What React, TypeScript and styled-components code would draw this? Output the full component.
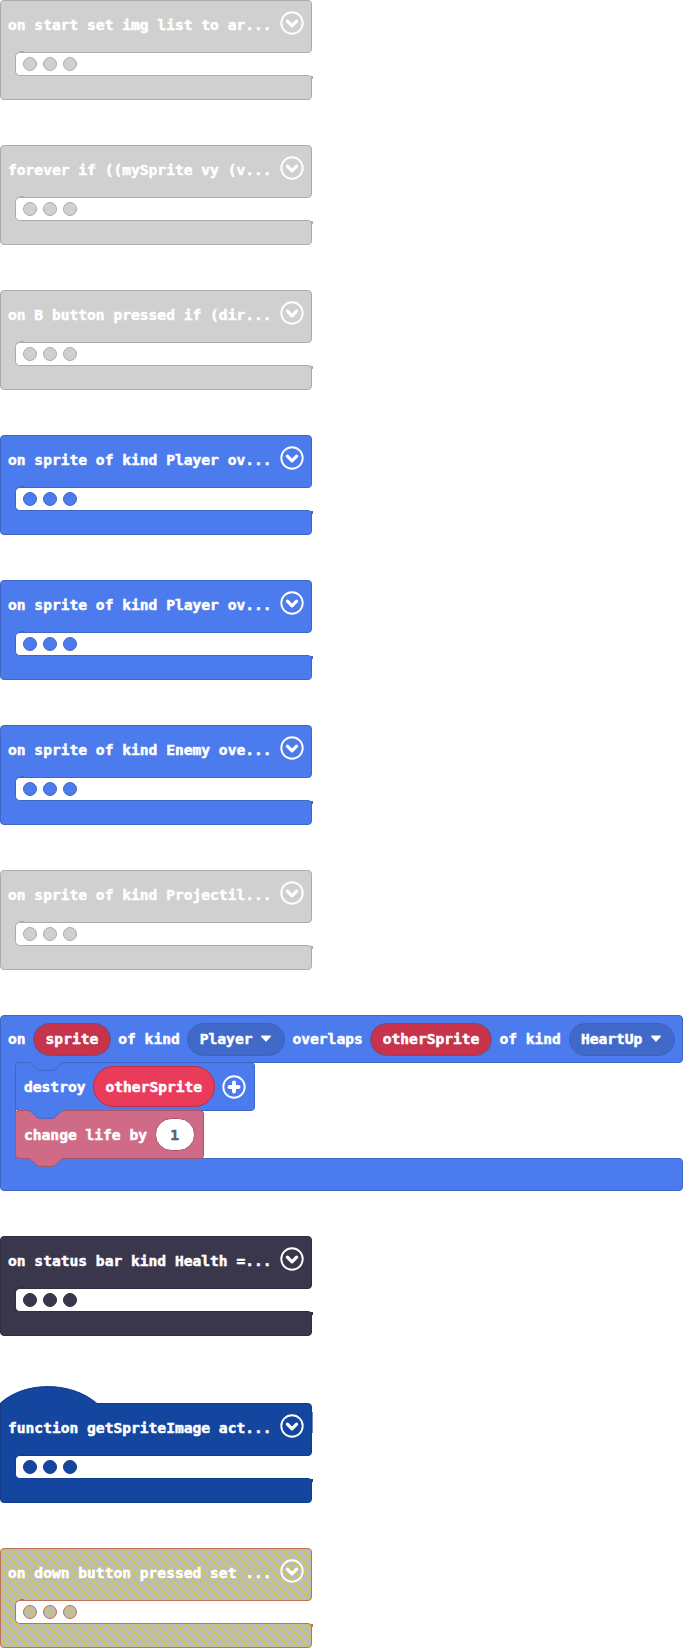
import React from "react";
import styled, { createGlobalStyle, css } from "styled-components";

const GlobalStyle = createGlobalStyle`
  body { margin: 0; background: #fff; }
  * { box-sizing: border-box; }
`;

interface Tone {
  fill: string;
  edge: string;
  hatch?: boolean;
}

const tones = {
  gray: { fill: "#d0d0d0", edge: "#acacac" },
  blue: { fill: "#4b7bec", edge: "#3f67c5" },
  navy: { fill: "#3a364c", edge: "#312d40" },
  royal: { fill: "#1446a0", edge: "#113b87" },
  disabled: { fill: "#bbbbbb", edge: "#bd7058", hatch: true },
  pink: { fill: "#cf6a87", edge: "#a6556c" },
} satisfies Record<string, Tone>;

const surface = css<{ $tone: Tone; $shift?: number }>`
  background-color: ${(p) => p.$tone.fill};
  ${(p) =>
    p.$tone.hatch &&
    css`
      background-image: linear-gradient(45deg, #d0cd3500 calc(50% - 0.8px), #d0cd35 50%, #d0cd3500 calc(50% + 0.8px)),
        linear-gradient(-45deg, #d0cd3500 calc(50% - 0.8px), #d0cd35 50%, #d0cd3500 calc(50% + 0.8px));
      background-size: 10px 10px;
      background-origin: border-box;
      background-position: 0 ${p.$shift ?? 0}px;
    `}
`;

const Workspace = styled.main`
  display: flex;
  flex-direction: column;
  align-items: flex-start;
  gap: 44px;
  width: 683px;
  height: 1648px;
  overflow: hidden;
  font: bold 14.6px/20px "DejaVu Sans Mono", monospace;
  -webkit-text-stroke: 0.5px;
  color: #fff;
  white-space: pre;
`;

const Block = styled.section<{ $hat?: boolean }>`
  position: relative;
  flex: none;
  width: 313px;
  height: 101px;
  margin-top: ${(p) => (p.$hat ? 22 : 0)}px;
`;

const WideBlock = styled(Block)`
  width: 683px;
  height: 177px;
`;

const Header = styled.header<{ $tone: Tone }>`
  ${surface}
  display: flex;
  justify-content: space-between;
  width: 312px;
  height: 53px;
  padding: 14px 7px 0 7px;
  border: 1px solid ${(p) => p.$tone.edge};
  border-radius: 4px 4px 4px 0;
`;

const WideHeader = styled(Header)`
  justify-content: flex-start;
  align-items: center;
  gap: 7.6px;
  width: 683px;
  height: 48px;
  padding: 0 7px;
`;

const Body = styled.div<{ $tone: Tone }>`
  ${surface}
  position: relative;
  z-index: 1;
  display: flex;
  width: 308px;
  height: 24px;
  margin-top: -1px;
  padding-left: 14px;
  border-left: 1px solid ${(p) => p.$tone.edge};
`;

const WideBody = styled(Body)`
  width: 679px;
  height: 97px;
`;

const Slot = styled.div<{ $tone: Tone }>`
  display: flex;
  flex: 1;
  gap: 6px;
  padding: 4px 0 0 7px;
  background: #fff;
  border: 1px solid ${(p) => p.$tone.edge};
  border-right: 0;
  border-radius: 5px 0 0 5px;
  &::before {
    content: "";
    position: absolute;
    left: 19px;
    top: -1px;
    width: 4px;
    height: 2px;
    background: ${(p) => p.$tone.edge};
  }
`;

const Stack = styled.div<{ $tone: Tone }>`
  display: flex;
  flex: 1;
  flex-direction: column;
  align-items: flex-start;
  background: #fff;
  border: 1px solid ${(p) => p.$tone.edge};
  border-right: 0;
  border-radius: 4px 0 0 4px;
`;

const Dot = styled.i<{ $tone: Tone }>`
  ${surface}
  width: 14px;
  height: 14px;
  border: 1px solid ${(p) => p.$tone.edge};
  border-radius: 50%;
`;

const Footer = styled.footer<{ $tone: Tone }>`
  ${surface}
  position: relative;
  width: 312px;
  height: 25px;
  margin-top: -1px;
  border: 1px solid ${(p) => p.$tone.edge};
  border-radius: 0 4px 4px 4px;
  &::after {
    content: "";
    position: absolute;
    right: -2px;
    top: 0;
    width: 2px;
    height: 3px;
    background: ${(p) => p.$tone.edge};
  }
`;

const WideFooter = styled(Footer)`
  width: 683px;
  height: 33px;
  &::after {
    display: none;
  }
`;

const Statement = styled.div<{ $tone: Tone }>`
  position: relative;
  display: flex;
  align-items: center;
  gap: 7.6px;
  flex: none;
  height: 49px;
  margin: -1px 0 0 -1px;
  padding: 0 8px;
  background: ${(p) => p.$tone.fill};
  border: 1px solid ${(p) => p.$tone.edge};
  border-radius: 4px;
`;

const Pill = styled.span<{ $fill: string; $edge: string; $tall?: boolean; $ink?: string }>`
  display: flex;
  align-items: center;
  justify-content: center;
  gap: 8px;
  min-width: 40px;
  height: ${(p) => (p.$tall ? 41 : 33)}px;
  padding: 0 11.4px;
  color: ${(p) => p.$ink ?? "#fff"};
  background: ${(p) => p.$fill};
  border: 1px solid ${(p) => p.$edge};
  border-radius: 21px;
`;

const Icon = styled.svg`
  flex: none;
  display: block;
`;

const HeaderIcon = styled(Icon)`
  margin-top: -4px;
`;

const NotchShape = styled.svg<{ $bottom?: boolean }>`
  position: absolute;
  left: 12px;
  ${(p) => (p.$bottom ? "bottom: -9px;" : "top: -1px;")}
  z-index: 1;
`;

const HatShape = styled.svg`
  position: absolute;
  left: 0;
  top: -17px;
`;

const SideShade = styled.i`
  position: absolute;
  left: 312px;
  top: 9px;
  width: 1px;
  height: 21px;
  background: #113b8799;
`;

const ExpandIcon = () => (
  <HeaderIcon width="24" height="24" viewBox="0 0 24 24" fill="none" stroke="#fff">
    <circle cx="12" cy="12" r="10.7" strokeWidth="1.9" />
    <path d="M7.4 10.2 12 14.8 16.6 10.2" strokeWidth="3.3" strokeLinecap="round" strokeLinejoin="round" />
  </HeaderIcon>
);

const PlusIcon = () => (
  <Icon width="24" height="24" viewBox="0 0 24 24" fill="none" stroke="#fff">
    <circle cx="12" cy="12" r="10.7" strokeWidth="1.9" />
    <path d="M12 7.5v9M7.5 12h9" strokeWidth="4" strokeLinecap="round" />
  </Icon>
);

const Caret = () => (
  <Icon width="12" height="8" viewBox="0 0 12 8" fill="#fff" stroke="#fff" strokeWidth="1.6" strokeLinejoin="round">
    <path d="M1.8 1.3h8.4L6 5.8z" />
  </Icon>
);

const Notch = ({ tone, bottom }: { tone: Tone; bottom?: boolean }) => (
  <NotchShape $bottom={bottom} width="36" height="9" viewBox="0 0 36 9">
    <path
      d="M0 0v.5c2 0 3 1 4 2l4 4c1 1 2 1.8 4 1.8h12c2 0 3-.8 4-1.8l4-4c1-1 2-2 4-2V0z"
      fill={tone.fill}
    />
    <path
      d="M0 .5c2 0 3 1 4 2l4 4c1 1 2 1.8 4 1.8h12c2 0 3-.8 4-1.8l4-4c1-1 2-2 4-2"
      fill="none"
      stroke={tone.edge}
    />
  </NotchShape>
);

const Hat = ({ tone }: { tone: Tone }) => (
  <HatShape width="98" height="24" viewBox="0 0 98 24">
    <path d="M0.5 24V17C25-5 71-5 97 17.5V24z" fill={tone.fill} />
    <path d="M0.5 24V17C25-5 71-5 97 17.5" fill="none" stroke={tone.edge} />
  </HatShape>
);

interface CollapsedProps {
  tone: Tone;
  label: string;
  hat?: boolean;
}

const Label = styled.span`
  position: relative;
`;

const Collapsed = ({ tone, label, hat }: CollapsedProps) => (
  <Block $hat={hat}>
    <Header $tone={tone}>
      {hat && <Hat tone={tone} />}
      {hat && <SideShade />}
      <Label>{label}</Label>
      <ExpandIcon />
    </Header>
    <Body $tone={tone} $shift={-2}>
      <Slot $tone={tone}>
        <Dot $tone={tone} />
        <Dot $tone={tone} />
        <Dot $tone={tone} />
      </Slot>
    </Body>
    <Footer $tone={tone} $shift={-5} />
  </Block>
);

const OverlapBlock = () => (
  <WideBlock>
    <WideHeader $tone={tones.blue}>
      <Label>on</Label>
      <Pill $fill="#c8334c" $edge="#5b529b">sprite</Pill>
      <Label>of kind</Label>
      <Pill $fill="#4069c9" $edge="#3c62bd">Player<Caret /></Pill>
      <Label>overlaps</Label>
      <Pill $fill="#c8334c" $edge="#5b529b">otherSprite</Pill>
      <Label>of kind</Label>
      <Pill $fill="#4069c9" $edge="#3c62bd">HeartUp<Caret /></Pill>
    </WideHeader>
    <WideBody $tone={tones.blue}>
      <Stack $tone={tones.blue}>
        <Statement $tone={tones.blue}>
          <Notch tone={tones.blue} />
          <Label>destroy</Label>
          <Pill $fill="#eb3b5a" $edge="#bc2f48" $tall>otherSprite</Pill>
          <PlusIcon />
        </Statement>
        <Statement $tone={tones.pink}>
          <Notch tone={tones.blue} />
          <Label>change life by</Label>
          <Pill $fill="#fff" $edge="#a6556c" $ink="#575e75">1</Pill>
          <Notch tone={tones.pink} bottom />
        </Statement>
      </Stack>
    </WideBody>
    <WideFooter $tone={tones.blue} />
  </WideBlock>
);

export default function App() {
  return (
    <>
      <GlobalStyle />
      <Workspace>
        <Collapsed tone={tones.gray} label="on start set img list to ar..." />
        <Collapsed tone={tones.gray} label="forever if ((mySprite vy (v..." />
        <Collapsed tone={tones.gray} label="on B button pressed if (dir..." />
        <Collapsed tone={tones.blue} label="on sprite of kind Player ov..." />
        <Collapsed tone={tones.blue} label="on sprite of kind Player ov..." />
        <Collapsed tone={tones.blue} label="on sprite of kind Enemy ove..." />
        <Collapsed tone={tones.gray} label="on sprite of kind Projectil..." />
        <OverlapBlock />
        <Collapsed tone={tones.navy} label="on status bar kind Health =..." />
        <Collapsed tone={tones.royal} label="function getSpriteImage act..." hat />
        <Collapsed tone={tones.disabled} label="on down button pressed set ..." />
      </Workspace>
    </>
  );
}
